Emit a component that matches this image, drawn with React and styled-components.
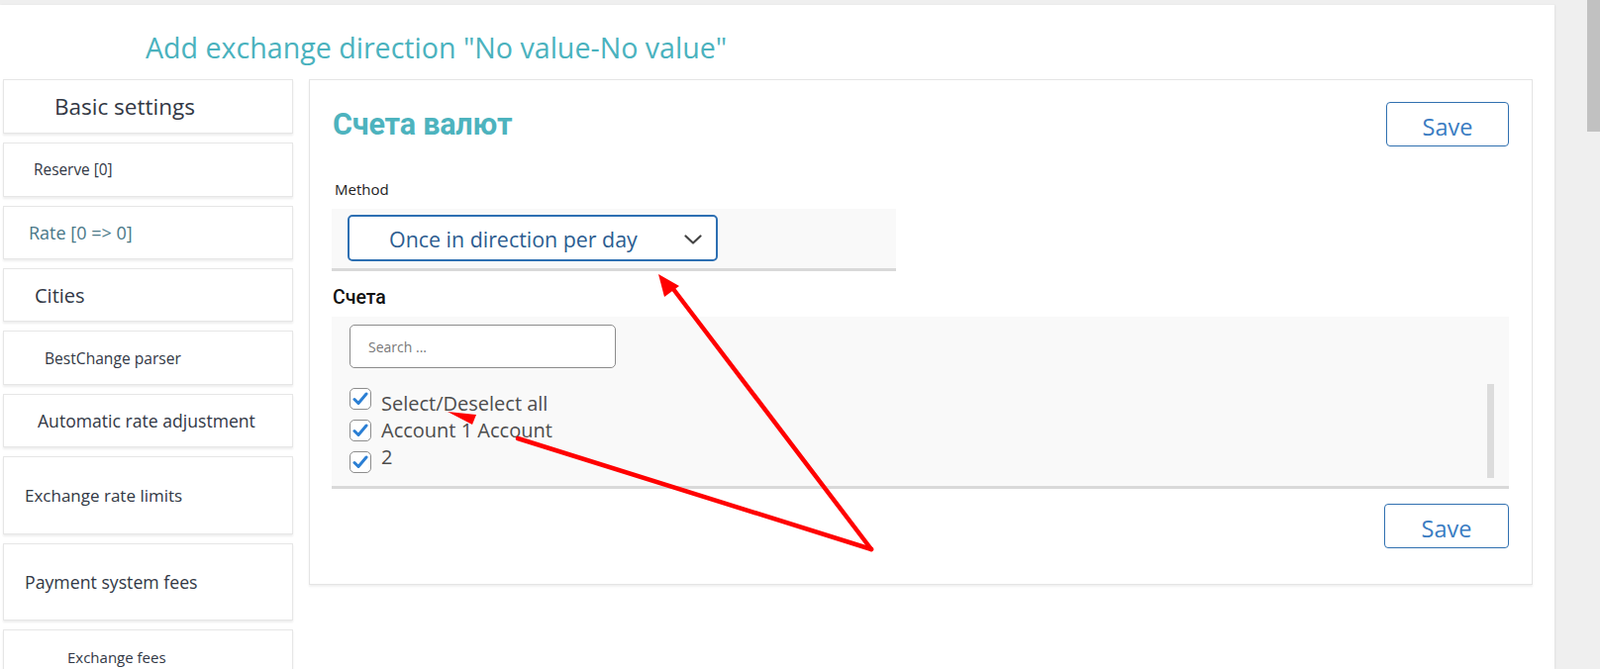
import React from 'react'
import styled, { createGlobalStyle } from 'styled-components'

const GlobalStyle = createGlobalStyle`
  html, body {
    margin: 0;
    padding: 0;
    background: #efefef;
  }
  * { box-sizing: border-box; }
`

const menu = [
  { label: 'Basic settings', size: 22.5, left: 54, height: 55 },
  { label: 'Reserve [0]', size: 15.4, left: 33, height: 55 },
  { label: 'Rate [0 => 0]', size: 18, left: 28, height: 54, muted: true },
  { label: 'Cities', size: 20, left: 34, height: 54 },
  { label: 'BestChange parser', size: 15.6, left: 44, height: 55 },
  { label: 'Automatic rate adjustment', size: 17.6, left: 37, height: 54 },
  { label: 'Exchange rate limits', size: 17, left: 24, height: 79 },
  { label: 'Payment system fees', size: 17.7, left: 24, height: 78 },
  { label: 'Exchange fees', size: 15, left: 67, height: 55 },
]

const accounts = ['Select/Deselect all', 'Account 1 Account', '2']

const Screen = styled.div`
  position: relative;
  display: flex;
  height: 676px;
  overflow: hidden;
  font-family: "Open Sans", "Noto Sans", sans-serif;
`

const Page = styled.div`
  width: 1570px;
  margin-top: 5px;
  background: #fff;
  box-shadow: 1px 0 2px rgba(0, 0, 0, 0.06);
`

const Gutter = styled.div`
  flex: 1;
  display: flex;
  justify-content: flex-end;
`

const Thumb = styled.div`
  width: 13px;
  height: 133px;
  background: #c1c1c1;
`

const Title = styled.h1`
  margin: 24px 0 0 147px;
  font-size: 28.6px;
  font-weight: 400;
  line-height: 38px;
  color: #4ab2be;
`

const Body = styled.div`
  display: flex;
  gap: 16px;
  margin-top: 13px;
  padding-left: 3px;
  align-items: flex-start;
`

const Sidebar = styled.nav`
  width: 293px;
  display: flex;
  flex-direction: column;
  gap: 9px;
`

const MenuCard = styled.div`
  height: ${p => p.$height}px;
  display: flex;
  align-items: center;
  padding-left: ${p => p.$left - 3}px;
  border: 1px solid #e6e6e6;
  box-shadow: 0 2px 2px rgba(0, 0, 0, 0.07);
  background: #fff;
  font-size: ${p => p.$size}px;
  color: ${p => (p.$muted ? '#4a7888' : '#323845')};
`

const Panel = styled.section`
  width: 1236px;
  border: 1px solid #e4e4e4;
  box-shadow: 0 2px 2px rgba(0, 0, 0, 0.06);
  padding: 22px 23px 36px 22px;
`

const Header = styled.div`
  display: flex;
  align-items: center;
  justify-content: space-between;
  height: 45px;
  padding-left: 1px;
`

const SectionTitle = styled.h2`
  margin: 0;
  font-family: Roboto, "Noto Sans", sans-serif;
  font-size: 30.5px;
  font-weight: 700;
  color: #4db3be;
  letter-spacing: -0.2px;
`

const SaveButton = styled.button`
  width: ${p => p.$width}px;
  height: 45px;
  border: 1px solid #3070b0;
  border-radius: 4px;
  background: #fff;
  font-family: "Open Sans", "Noto Sans", sans-serif;
  font-size: 23.5px;
  color: #3a7cc2;
  padding: 4px 0 0;
  cursor: pointer;
`

const FieldLabel = styled.div`
  margin: 33px 0 0 3px;
  font-size: 15px;
  line-height: 21px;
  color: #222;
`

const SelectWrap = styled.div`
  width: 570px;
  margin-top: 9px;
  padding: 6px 0 7px 16px;
  background: #f9f9f9;
  border-bottom: 3px solid #d9d9d9;
`

const Select = styled.div`
  width: 374px;
  height: 47px;
  display: flex;
  align-items: center;
  justify-content: space-between;
  padding: 2px 14px 0 40px;
  border: 2px solid #2d6fb2;
  border-radius: 5px;
  background: #fff;
  font-size: 21.4px;
  color: #2b5c90;
`

const SubTitle = styled.h3`
  margin: 15px 0 0 1px;
  font-family: Roboto, "Noto Sans", sans-serif;
  font-size: 19.5px;
  font-weight: 500;
  line-height: 24px;
  color: #111;
`

const ListBox = styled.div`
  margin-top: 7px;
  padding: 8px 15px 8px 18px;
  background: #f9f9f9;
  border-bottom: 3px solid #d9d9d9;
`

const Search = styled.input`
  width: 269px;
  height: 44px;
  padding: 0 18px;
  border: 1px solid #8c8c8c;
  border-radius: 5px;
  background: #fff;
  font-family: "Open Sans", "Noto Sans", sans-serif;
  font-size: 14px;
  color: #333;
  outline: none;
  &::placeholder { color: #787878; }
`

const Options = styled.div`
  display: flex;
  justify-content: space-between;
  height: 95px;
  margin-top: 16px;
`

const Checks = styled.div`
  display: flex;
  gap: 10px;
  padding-top: 4px;
`

const BoxColumn = styled.div`
  display: flex;
  flex-direction: column;
  gap: 10px;
`

const Box = styled.span`
  width: 22px;
  height: 22px;
  display: flex;
  align-items: center;
  justify-content: center;
  border: 1.5px solid #8d8d8d;
  border-radius: 5px;
  background: #fff;
`

const Labels = styled.div`
  padding-top: 2px;
  font-size: 20px;
  line-height: 27px;
  color: #4d4d4d;
  span { display: block; }
`

const ListScroll = styled.div`
  width: 7px;
  background: #dcdcdc;
`

const Footer = styled.div`
  display: flex;
  justify-content: flex-end;
  margin-top: 15px;
`

const Annotations = styled.svg`
  position: absolute;
  left: 0;
  top: 0;
  pointer-events: none;
`

const Check = () => (
  <svg width="16" height="14" viewBox="0 0 16 14">
    <path d="M2 7.5l4 4 8-9.5" fill="none" stroke="#2b7fd4" strokeWidth="3" strokeLinecap="round" strokeLinejoin="round" />
  </svg>
)

const Chevron = () => (
  <svg width="18" height="10" viewBox="0 0 18 10">
    <path d="M1.5 1.5l7.5 7 7.5-7" fill="none" stroke="#444" strokeWidth="2.2" strokeLinecap="round" strokeLinejoin="round" />
  </svg>
)

export default function App() {
  return (
    <>
      <GlobalStyle />
      <Screen>
        <Page>
          <Title>Add exchange direction "No value-No value"</Title>
          <Body>
            <Sidebar>
              {menu.map(item => (
                <MenuCard key={item.label} $size={item.size} $left={item.left} $height={item.height} $muted={item.muted}>
                  {item.label}
                </MenuCard>
              ))}
            </Sidebar>

            <Panel>
              <Header>
                <SectionTitle>Счета валют</SectionTitle>
                <SaveButton $width={124}>Save</SaveButton>
              </Header>

              <FieldLabel>Method</FieldLabel>
              <SelectWrap>
                <Select>
                  <span>Once in direction per day</span>
                  <Chevron />
                </Select>
              </SelectWrap>

              <SubTitle>Счета</SubTitle>
              <ListBox>
                <Search placeholder="Search ..." />
                <Options>
                  <Checks>
                    <BoxColumn>
                      {accounts.map(a => (
                        <Box key={a}><Check /></Box>
                      ))}
                    </BoxColumn>
                    <Labels>
                      {accounts.map(a => <span key={a}>{a}</span>)}
                    </Labels>
                  </Checks>
                  <ListScroll />
                </Options>
              </ListBox>

              <Footer>
                <SaveButton $width={126}>Save</SaveButton>
              </Footer>
            </Panel>
          </Body>
        </Page>
        <Gutter>
          <Thumb />
        </Gutter>

        <Annotations width="1616" height="676">
          <g stroke="#ff0000" strokeWidth="4.5" strokeLinecap="round" fill="#ff0000">
            <line x1="880" y1="555" x2="680" y2="292" />
            <line x1="880" y1="555" x2="523" y2="443" />
          </g>
          <polygon points="665,277 686,289 671,300" fill="#ff0000" />
          <polygon points="452,416 481,419 477,429" fill="#ff0000" />
        </Annotations>
      </Screen>
    </>
  )
}
